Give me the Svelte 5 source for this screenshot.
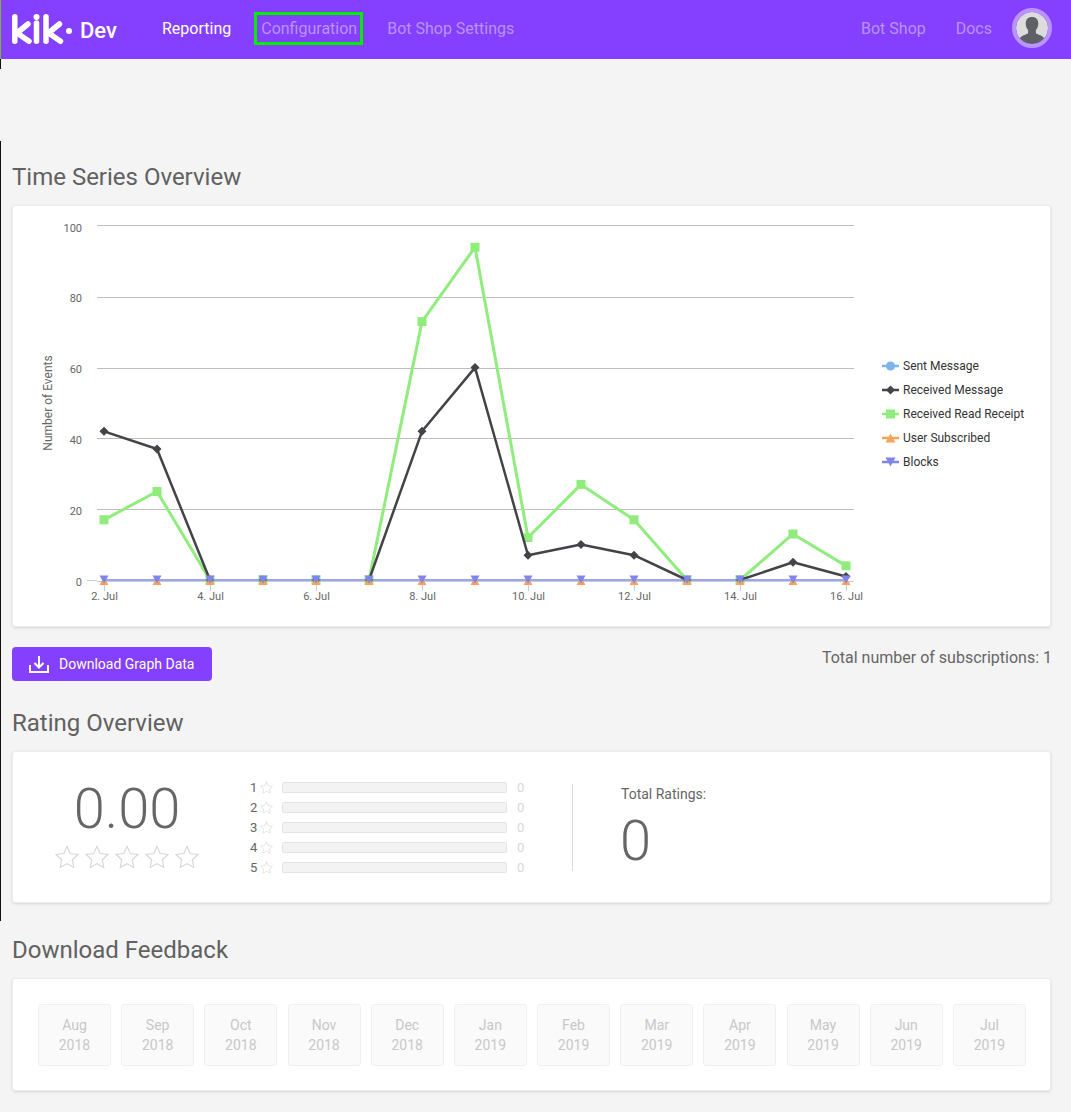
<script>
  const X0 = 104, DX = 53;
  const Y0 = 580, SY = 3.54;
  const px = (i) => X0 + DX * i;
  const py = (v) => Y0 - SY * v;
  const received = [42, 37, 0, 0, 0, 0, 42, 60, 7, 10, 7, 0, 0, 5, 1];
  const read = [17, 25, 0, 0, 0, 0, 73, 94, 12, 27, 17, 0, 0, 13, 4];
  const zero = received.map(() => 0);
  const line = (d) => d.map((v, i) => `${px(i)},${py(v)}`).join(' ');
  // a stretch along the zero line lies under the blue series, so only the raised runs are drawn
  const runs = (d) => {
    const out = [];
    let cur = [];
    d.forEach((v, i) => {
      if (i > 0 && v === 0 && d[i - 1] === 0) {
        if (cur.length > 1) out.push(cur.join(' '));
        cur = [];
      }
      cur.push(`${px(i)},${py(v)}`);
    });
    if (cur.length > 1) out.push(cur.join(' '));
    return out;
  };
  const ticksY = [
    { v: 100, y: 225.5 },
    { v: 80, y: 297.5 },
    { v: 60, y: 368.5 },
    { v: 40, y: 438.5 },
    { v: 20, y: 509.5 }
  ];
  const ticksX = [0, 2, 4, 6, 8, 10, 12, 14].map((i) => ({ i, label: `${i + 2}. Jul` }));
  const legend = [
    { name: 'Sent Message', color: '#7cb5ec', shape: 'circle' },
    { name: 'Received Message', color: '#434348', shape: 'diamond' },
    { name: 'Received Read Receipt', color: '#90ed7d', shape: 'square' },
    { name: 'User Subscribed', color: '#f7a35c', shape: 'up' },
    { name: 'Blocks', color: '#8085e9', shape: 'down' }
  ];
  const starPath = 'M10 1.2l2.7 5.9 6.4.8-4.7 4.4 1.2 6.4L10 15.6l-5.6 3.1 1.2-6.4L.9 7.9l6.4-.8z';
  const ratings = [1, 2, 3, 4, 5];
  const months = [
    ['Aug', 2018], ['Sep', 2018], ['Oct', 2018], ['Nov', 2018], ['Dec', 2018], ['Jan', 2019],
    ['Feb', 2019], ['Mar', 2019], ['Apr', 2019], ['May', 2019], ['Jun', 2019], ['Jul', 2019]
  ];
</script>

<div class="page">
  <span class="edge edge-a"></span>
  <span class="edge edge-b"></span>
  <span class="edge edge-c"></span>

  <header class="nav">
    <div class="brand">
      <svg class="logo" width="62" height="30" viewBox="0 0 62 30" aria-label="Kik">
        <g fill="none" stroke="#fff" stroke-width="5.500" stroke-linecap="round" stroke-linejoin="round">
          <path d="M2.800 2.800v24.400" />
          <path d="M16 10l-11 9 12 8.200" />
          <path d="M24.500 9v18.200" />
          <path d="M34 2.800v24.400" />
          <path d="M47.500 10l-11 9 12 8.200" />
        </g>
        <circle cx="24.500" cy="3" r="3" fill="#fff" />
        <circle cx="57" cy="17" r="3" fill="#fff" />
      </svg>
      <span class="dev">Dev</span>
    </div>
    <nav class="links">
      <a class="active" href="#r">Reporting</a>
      <a class="focused" href="#c">Configuration</a>
      <a href="#b">Bot Shop Settings</a>
    </nav>
    <nav class="links right">
      <a href="#s">Bot Shop</a>
      <a href="#d">Docs</a>
      <span class="avatar">
        <svg width="32" height="32" viewBox="0 0 32 32">
          <circle cx="16" cy="16" r="16" fill="#dcdcdc" />
          <path d="M16 5c-4 0-6.300 2.700-6.300 6.600 0 2.700 1 5 2.400 6.500v2.300c0 .8-.5 1.300-1.400 1.700-3 1.200-5.700 2.200-7 4.500A16 16 0 0 0 16 32a16 16 0 0 0 12.300-5.400c-1.300-2.300-4-3.300-7-4.500-.9-.4-1.400-.9-1.400-1.700v-2.300c1.400-1.500 2.400-3.800 2.400-6.500C22.300 7.700 20 5 16 5z" fill="#5f6065" />
        </svg>
      </span>
    </nav>
  </header>

  <main class="content">
    <h2>Time Series Overview</h2>
    <section class="card chart-card">
      <svg class="chart" width="1037" height="420" viewBox="13 206 1037 420">
        {#each ticksY as t}
          <line x1="97" x2="854" y1={t.y} y2={t.y} class="grid" />
          <text class="tick" x="82" y={py(t.v) + 5.500} text-anchor="end">{t.v}</text>
        {/each}
        <text class="tick" x="82" y="585.500" text-anchor="end">0</text>
        <line x1="87" x2="97" y1="580.500" y2="580.500" class="axis" />
        <line x1="97" x2="854" y1="581.500" y2="581.500" class="axis" />
        {#each ticksX as t}
          <line x1={px(t.i) + 0.5} x2={px(t.i) + 0.5} y1="581" y2="591" class="axis" />
          <text class="tick" x={px(t.i) + 0.5} y="600" text-anchor="middle">{t.label}</text>
        {/each}
        <text class="ytitle" transform="translate(52 403) rotate(-90)" text-anchor="middle">Number of Events</text>

        {#each runs(read) as pts}
          <polyline points={pts} class="series wide" stroke="#90ed7d" />
        {/each}
        {#each read as v, i}
          <rect x={px(i) - 4.5} y={py(v) - 4.5} width="9" height="9" fill="#90ed7d" />
        {/each}
        {#each runs(received) as pts}
          <polyline points={pts} class="series" stroke="#434348" />
        {/each}
        {#each received as v, i}
          <path d="M{px(i)} {py(v) - 4.5}l4.500 4.500-4.500 4.500-4.500-4.500z" fill="#434348" />
        {/each}
        {#each zero as v, i}
          <path d="M{px(i)} {py(v) - 3}l4.500 8h-9z" fill="#f7a35c" />
        {/each}
        <polyline points={line(zero)} class="series thin" stroke="#8085e9" />
        {#each zero as v, i}
          <path d="M{px(i) - 4.5} {py(v) - 4.5}h9l-4.500 8z" fill="#8085e9" />
        {/each}

        {#each legend as l, i}
          {@const y = 366 + i * 24}
          <line x1="882" x2="899" y1={y} y2={y} stroke={l.color} stroke-width="2.500" />
          {#if l.shape === 'circle'}
            <circle cx="890.500" cy={y} r="4.500" fill={l.color} />
          {:else if l.shape === 'diamond'}
            <path d="M890.500 {y - 4.5}l4.500 4.500-4.500 4.500-4.500-4.500z" fill={l.color} />
          {:else if l.shape === 'square'}
            <rect x="886" y={y - 4.5} width="9" height="9" fill={l.color} />
          {:else if l.shape === 'up'}
            <path d="M890.500 {y - 4.5}l5 9h-10z" fill={l.color} />
          {:else}
            <path d="M885.500 {y - 4.5}h10l-5 9z" fill={l.color} />
          {/if}
          <text class="legend" x="903" y={y + 4}>{l.name}</text>
        {/each}
      </svg>
    </section>

    <div class="actions">
      <button class="download">
        <svg width="20" height="17" viewBox="0 0 20 17" fill="none" stroke="#fff" stroke-width="2">
          <path d="M1 9v7h18V9" />
          <path d="M10 0v11M5.500 7l4.500 4.500L14.500 7" />
        </svg>
        Download Graph Data
      </button>
      <span class="subs">Total number of subscriptions: 1</span>
    </div>

    <h2 class="second">Rating Overview</h2>
    <section class="card rating-card">
      <div class="score">
        <div class="big">0.00</div>
        <div class="stars">
          {#each ratings as r}
            <svg width="24" height="24" viewBox="0 0 20 20"><path d={starPath} class="star" /></svg>
          {/each}
        </div>
      </div>
      <div class="bars">
        {#each ratings as r}
          <div class="bar-row">
            <span class="num">{r}</span>
            <svg width="13" height="13" viewBox="0 0 20 20"><path d={starPath} class="star" /></svg>
            <span class="track"></span>
            <span class="count">0</span>
          </div>
        {/each}
      </div>
      <div class="total">
        <div class="total-label">Total Ratings:</div>
        <div class="total-value">0</div>
      </div>
    </section>

    <h2 class="third">Download Feedback</h2>
    <section class="card months">
      {#each months as m}
        <div class="month"><span>{m[0]}</span><span>{m[1]}</span></div>
      {/each}
    </section>
  </main>
</div>

<style>
  :global(body) {
    margin: 0;
    background: #f4f4f4;
  }
  .page {
    position: relative;
    min-height: 1112px;
    overflow: hidden;
    font-family: Roboto, "Liberation Sans", sans-serif;
    color: #5c5c5c;
  }
  .edge {
    position: absolute;
    left: 0;
    width: 1px;
    background: #111;
    z-index: 2;
  }
  .edge-a { top: 0; height: 59px; background: #7fb52e; }
  .edge-b { top: 59px; height: 10px; }
  .edge-c { top: 141px; height: 780px; }

  .nav {
    display: flex;
    align-items: center;
    box-sizing: border-box;
    height: 59px;
    background: #8540ff;
    padding: 0 19px 2px 12px;
  }
  .brand {
    display: flex;
    align-items: center;
    width: 150px;
    gap: 6px;
    color: #fff;
  }
  .logo { margin-top: 1px; }
  .dev {
    font-size: 22px;
    font-weight: 500;
    margin-top: 3px;
  }
  .links {
    display: flex;
    align-items: center;
    gap: 30px;
    font-size: 16px;
  }
  .links a {
    color: #b993ff;
    text-decoration: none;
  }
  .links a.active { color: #fff; }
  .links a.focused {
    outline: 3px solid #00ee00;
    padding: 4px 3px 4px 4px;
    margin: 0 -3px 0 -4px;
  }
  .right {
    margin-left: auto;
  }
  .avatar {
    display: block;
    width: 32px;
    height: 32px;
    border: 4px solid #b993ff;
    border-radius: 50%;
    overflow: hidden;
    margin-left: -10px;
    margin-bottom: 2px;
  }
  .avatar svg { display: block; }

  .content {
    padding: 0 20px 0 12px;
  }
  h2 {
    margin: 0;
    font-size: 24px;
    font-weight: 400;
    line-height: 28px;
    color: #616161;
  }
  .content > h2:first-child {
    padding-top: 104px;
    height: 28px;
    margin-bottom: 14px;
  }
  .card {
    box-sizing: border-box;
    background: #fff;
    border: 1px solid #ececec;
    border-radius: 3px;
    box-shadow: 0 1px 3px rgba(0, 0, 0, 0.12);
  }
  .chart-card {
    height: 422px;
  }
  .chart { display: block; }
  .grid { stroke: #bdbdbd; stroke-width: 1; }
  .axis { stroke: #c0d0e0; stroke-width: 1; }
  .tick {
    font: 11px Roboto, sans-serif;
    fill: #666;
  }
  .ytitle {
    font: 12px Roboto, sans-serif;
    fill: #666;
  }
  .legend {
    font: 12px Roboto, sans-serif;
    fill: #333;
  }
  .series {
    fill: none;
    stroke-width: 2.500;
    stroke-linejoin: round;
  }
  .series.wide { stroke-width: 3; }
  .series.thin { stroke-width: 1.500; }

  .actions {
    display: flex;
    justify-content: space-between;
    align-items: flex-start;
    margin-top: 20px;
  }
  .download {
    display: flex;
    align-items: center;
    gap: 10px;
    height: 34px;
    width: 200px;
    padding: 0 0 0 17px;
    border: 0;
    border-radius: 4px;
    background: #8540ff;
    color: #fff;
    font: 14px Roboto, sans-serif;
  }
  .subs {
    font-size: 16px;
    line-height: 20px;
    margin-top: 1px;
    margin-right: -1px;
    color: #666;
  }
  .second {
    margin-top: 28px;
    margin-bottom: 14px;
  }
  .rating-card {
    display: flex;
    height: 152px;
    position: relative;
  }
  .score {
    width: 228px;
    text-align: center;
    flex: none;
  }
  .big {
    font-size: 56px;
    font-weight: 300;
    line-height: 70px;
    margin-top: 22px;
    color: #666;
  }
  .stars {
    display: flex;
    justify-content: center;
    gap: 6px;
    margin-top: 1px;
  }
  .star {
    fill: #fff;
    stroke: #d8d8d8;
    stroke-width: 1;
  }
  .bars {
    width: 331px;
    padding-top: 25px;
    flex: none;
  }
  .bar-row {
    display: flex;
    align-items: center;
    height: 20px;
    padding-left: 9px;
    font-size: 13px;
    box-sizing: border-box;
  }
  .num { width: 8px; margin-right: 2px; color: #666; }
  .track {
    width: 223px;
    height: 9px;
    margin-left: 9px;
    background: #f3f3f3;
    border: 1px solid #e4e4e4;
    border-radius: 2px;
  }
  .count {
    margin-left: 10px;
    color: #d8d8de;
  }
  .total {
    border-left: 1px solid #dcdcdc;
    height: 87px;
    margin-top: 32px;
    padding-left: 48px;
  }
  .total-label {
    font-size: 14px;
    line-height: 20px;
    color: #666;
  }
  .total-value {
    font-size: 56px;
    font-weight: 300;
    line-height: 70px;
    margin-top: 2px;
    margin-left: -1px;
    color: #666;
  }
  .third {
    margin-top: 33px;
    margin-bottom: 14px;
  }
  .months {
    display: grid;
    grid-template-columns: repeat(12, 73px);
    justify-content: space-between;
    padding: 25px 24px 24px 25px;
  }
  .month {
    display: flex;
    flex-direction: column;
    align-items: center;
    justify-content: center;
    height: 62px;
    background: #fafafa;
    border: 1px solid #f0f0f0;
    border-radius: 3px;
    box-sizing: border-box;
    font-size: 14px;
    line-height: 20px;
    color: #c8c8c8;
  }
</style>
